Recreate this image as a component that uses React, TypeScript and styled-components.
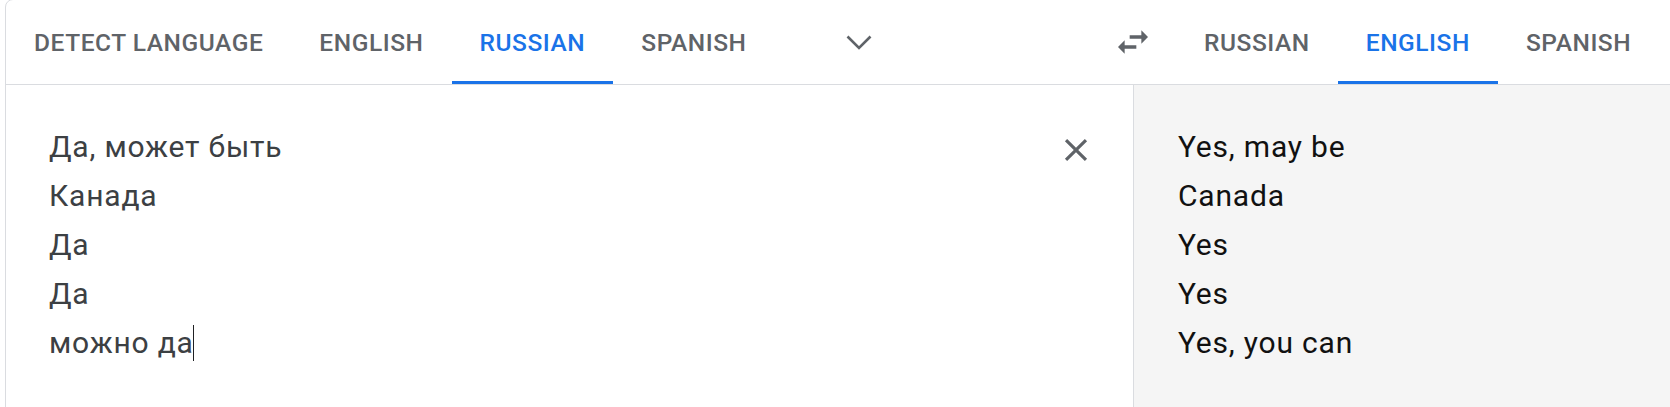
import React from "react";
import styled, { createGlobalStyle } from "styled-components";

const GlobalStyle = createGlobalStyle`
  html, body {
    margin: 0;
    padding: 0;
    background: #ffffff;
    overflow: hidden;
  }
  body {
    font-family: Roboto, "Noto Sans", Arial, sans-serif;
  }
  * { box-sizing: border-box; }
`;

const Card = styled.div`
  margin: -1px 0 0 5px;
  width: 1700px;
  border: 1px solid #dadce0;
  border-radius: 8px;
  display: grid;
  grid-template-columns: 1127px 1fr;
  overflow: hidden;
  background: #fff;
`;

const Header = styled.div`
  grid-column: 1 / -1;
  display: flex;
  align-items: stretch;
  height: 85px;
  border-bottom: 1px solid #dadce0;
`;

const LangBar = styled.div<{ $width?: number }>`
  display: flex;
  align-items: stretch;
  ${(p) => (p.$width ? `width: ${p.$width}px;` : "")}
`;

const Tab = styled.button<{ $active?: boolean }>`
  appearance: none;
  background: none;
  border: none;
  border-bottom: 3px solid ${(p) => (p.$active ? "#1a73e8" : "transparent")};
  padding: 4px 28px 0;
  margin: 0;
  font-family: Roboto, Arial, sans-serif;
  font-size: 24.5px;
  font-weight: 500;
  letter-spacing: 0.55px;
  color: ${(p) => (p.$active ? "#1a73e8" : "#5f6368")};
  cursor: pointer;
  white-space: nowrap;
`;

const IconButton = styled.button<{ $w: number; $ml?: number }>`
  appearance: none;
  background: none;
  border: none;
  padding: 0;
  width: ${(p) => p.$w}px;
  margin-left: ${(p) => p.$ml ?? 0}px;
  display: flex;
  align-items: center;
  justify-content: center;
  color: #5f6368;
  cursor: pointer;
  flex-shrink: 0;
`;

const RightTabs = styled(LangBar)`
  margin-left: 19px;
`;

const SourcePanel = styled.div`
  display: flex;
  align-items: flex-start;
  padding: 37px 33px 0 43px;
  min-height: 340px;
`;

const TargetPanel = styled.div`
  border-left: 1px solid #dadce0;
  background: #f5f5f5;
  padding: 37px 0 0 44px;
  min-height: 340px;
`;

const TextBlock = styled.div<{ $dark?: boolean }>`
  flex: 1;
  font-family: Roboto, Arial, sans-serif;
  font-size: 30px;
  letter-spacing: 0.8px;
  line-height: 49px;
  color: ${(p) => (p.$dark ? "#111111" : "#3c4043")};
`;

const Line = styled.div`
  white-space: nowrap;
`;

const Caret = styled.span`
  display: inline-block;
  width: 0;
  height: 36px;
  margin-left: -0.8px;
  border-left: 1.5px solid #202124;
  vertical-align: -8px;
`;

const CloseButton = styled(IconButton)`
  height: 48px;
  margin-top: 4px;
`;

const Chevron = () => (
  <svg width="28" height="17" viewBox="0 0 28 17">
    <polyline
      points="2.5,2.5 14,14 25.5,2.5"
      fill="none"
      stroke="currentColor"
      strokeWidth="2.6"
    />
  </svg>
);

const SwapIcon = () => (
  <svg width="40" height="40" viewBox="0 0 24 24" fill="currentColor">
    <path d="M6.99 11L3 15l3.99 4v-3H14v-2H6.99v-3zM21 9l-3.99-4v3H10v2h7.01v3L21 9z" />
  </svg>
);

const CloseIcon = () => (
  <svg width="38" height="38" viewBox="0 0 24 24" fill="currentColor">
    <path d="M19 6.41L17.59 5 12 10.59 6.41 5 5 6.41 10.59 12 5 17.59 6.41 19 12 13.41 17.59 19 19 17.59 13.41 12z" />
  </svg>
);

export default function App() {
  const source = ["Да, может быть", "Канада", "Да", "Да"];
  const target = ["Yes, may be", "Canada", "Yes", "Yes", "Yes, you can"];
  return (
    <>
      <GlobalStyle />
      <Card>
        <Header>
          <LangBar $width={1103}>
            <Tab>DETECT LANGUAGE</Tab>
            <Tab>ENGLISH</Tab>
            <Tab $active>RUSSIAN</Tab>
            <Tab>SPANISH</Tab>
            <IconButton $w={56} $ml={56}>
              <Chevron />
            </IconButton>
          </LangBar>
          <IconButton $w={48}>
            <SwapIcon />
          </IconButton>
          <RightTabs>
            <Tab>RUSSIAN</Tab>
            <Tab $active>ENGLISH</Tab>
            <Tab>SPANISH</Tab>
          </RightTabs>
        </Header>
        <SourcePanel>
          <TextBlock>
            {source.map((l, i) => (
              <Line key={i}>{l}</Line>
            ))}
            <Line>
              можно да
              <Caret />
            </Line>
          </TextBlock>
          <CloseButton $w={48}>
            <CloseIcon />
          </CloseButton>
        </SourcePanel>
        <TargetPanel>
          <TextBlock $dark>
            {target.map((l, i) => (
              <Line key={i}>{l}</Line>
            ))}
          </TextBlock>
        </TargetPanel>
      </Card>
    </>
  );
}
